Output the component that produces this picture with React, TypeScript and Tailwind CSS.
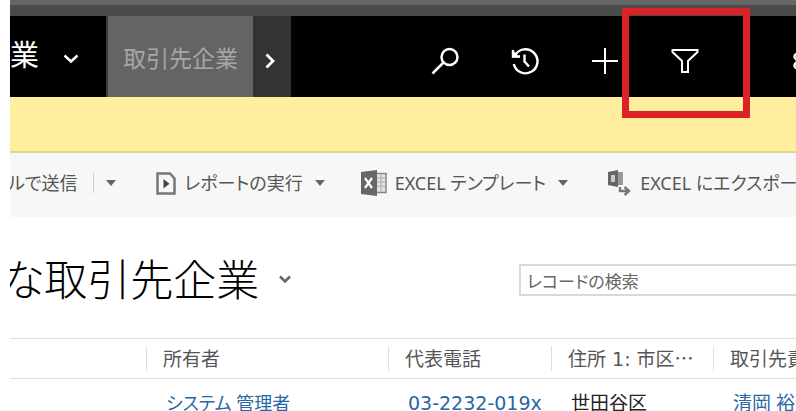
import type { ReactNode } from "react";
import { Settings } from "lucide-react";

function Caret() {
  return (
    <svg width="10" height="6" viewBox="0 0 10 6" aria-hidden="true">
      <path d="M0 0h10L5 6z" fill="#666" />
    </svg>
  );
}

function IconButton({ label, className = "", children }: { label: string; className?: string; children: ReactNode }) {
  return (
    <button type="button" aria-label={label} className={`flex h-full w-20 shrink-0 items-center justify-center ${className}`}>
      {children}
    </button>
  );
}

function Header() {
  return (
    <header className="flex h-[81px] bg-black text-white">
      <div className="flex w-24 shrink-0 items-center overflow-hidden">
        <button type="button" className="flex shrink-0 items-center gap-6">
          <span className="-mt-1 text-[29px] leading-10">業</span>
          <svg width="16" height="10" viewBox="0 0 16 10" className="mt-1" aria-hidden="true">
            <path d="M1.5 1.5L8 7.5l6.500-6" fill="none" stroke="#fff" strokeWidth="2.400" />
          </svg>
        </button>
      </div>
      <button type="button" className="w-[147px] shrink-0 border-l-2 border-[#3c3c3c] bg-[#646464] pt-1 text-[23px] text-[#a6a6a6]">
        取引先企業
      </button>
      <button type="button" aria-label="次へ" className="flex w-[38px] shrink-0 items-center bg-[#333] pl-3 pt-2">
        <svg width="10" height="16" viewBox="0 0 10 16" aria-hidden="true">
          <path d="M1.500 1.500L8 8l-6.500 6.500" fill="none" stroke="#fff" strokeWidth="2.800" />
        </svg>
      </button>
      <nav className="flex min-w-0 flex-1 overflow-hidden pl-[114px] pt-2" aria-label="ツール">
        <IconButton label="検索">
          <svg width="28" height="28" viewBox="0 0 28 28" fill="none" stroke="#fff" strokeWidth="2.500" aria-hidden="true">
            <circle cx="18.500" cy="10" r="8" />
            <path d="M12.500 15.500L1.500 26.500" />
          </svg>
        </IconButton>
        <IconButton label="履歴">
          <svg width="28" height="28" viewBox="0 0 28 28" fill="none" stroke="#fff" strokeWidth="2.400" aria-hidden="true">
            <path d="M4 8.500A12 12 0 1 1 2.800 17M2 3v6.500h7M13.500 7.500v7l4.500 5" />
            <path d="M1 2.500v8h8z" fill="#fff" stroke="none" />
          </svg>
        </IconButton>
        <IconButton label="新規作成">
          <svg width="26" height="26" viewBox="0 0 26 26" stroke="#fff" strokeWidth="2" aria-hidden="true">
            <path d="M13 0v26M0 13h26" />
          </svg>
        </IconButton>
        <IconButton label="高度な検索">
          <svg width="28" height="26" viewBox="0 0 28 26" fill="none" stroke="#fff" strokeWidth="2" aria-hidden="true">
            <path d="M1.500 2h25v2l-9.500 9v11h-6V13L1.500 4z" />
          </svg>
        </IconButton>
        <IconButton label="設定" className="ml-10">
          <Settings size={28} strokeWidth={2} />
        </IconButton>
      </nav>
    </header>
  );
}

function CommandBar() {
  return (
    <div role="toolbar" className="flex h-16 items-center overflow-hidden whitespace-nowrap bg-[#f7f7f7] pb-1 text-[18px] text-[#555]">
      <button type="button" className="-ml-0.5 shrink-0">ルで送信</button>
      <button type="button" aria-label="送信オプション" className="ml-4 flex h-5 items-center border-l border-[#ccc] pl-3"><Caret /></button>
      <button type="button" className="ml-10 flex shrink-0 items-center gap-2">
        <svg width="20" height="23" viewBox="0 0 20 23" aria-hidden="true">
          <path d="M1.500 1.500H14l4.500 5v15h-17z" fill="none" stroke="#777" strokeWidth="2.500" />
          <path d="M7.500 7v9.500l6-4.800z" fill="#444" />
        </svg>
        レポートの実行
        <span className="ml-1"><Caret /></span>
      </button>
      <button type="button" className="ml-9 flex shrink-0 items-center gap-2">
        <svg width="26" height="26" viewBox="0 0 26 26" aria-hidden="true">
          <path d="M15 3.500h10v19H15" fill="#e4e4e4" stroke="#888" strokeWidth="1.500" />
          <path d="M16 8h8M16 12h8M16 16h8M20 4v18" stroke="#aaa" />
          <path d="M0 2l16-2v26L0 24z" fill="#666" />
          <path d="M4 8l7 10M11 8L4 18" stroke="#fff" strokeWidth="2.200" />
        </svg>
        EXCEL テンプレート
        <span className="ml-1"><Caret /></span>
      </button>
      <button type="button" className="ml-10 flex shrink-0 items-center gap-2">
        <svg width="24" height="26" viewBox="0 0 24 26" aria-hidden="true">
          <path d="M0 2l10-2v17L0 15z" fill="#666" />
          <path d="M3 5h4v7H3z" fill="#ccc" />
          <path d="M10 2h5v13h-5z" fill="#999" />
          <path d="M12 17v4h9M16.500 17l4.500 4-4.500 4" fill="none" stroke="#777" strokeWidth="2.400" />
        </svg>
        EXCEL にエクスポート
      </button>
    </div>
  );
}

const columns = ["所有者", "代表電話", "住所 1: 市区…", "取引先責任者"];

function AccountsGrid() {
  return (
    <table className="w-full min-w-[860px] table-fixed border-collapse text-left text-[19px]">
      <colgroup>
        <col className="w-[136px]" />
        <col className="w-[242px]" />
        <col className="w-[163px]" />
        <col className="w-[162px]" />
        <col />
      </colgroup>
      <thead>
        <tr className="h-10 border-y border-[#ddd] font-['DejaVu_Sans','Noto_Sans_CJK_JP',sans-serif] text-[#555] [font-feature-settings:normal]">
          <th aria-label="名前" />
          {columns.map((column) => (
            <th key={column} scope="col" className="whitespace-nowrap p-0 font-normal">
              <span className="block border-l border-[#ddd] pl-4 leading-6">
                {column.replace("…", "")}
                {column.endsWith("…") && <span className="font-['Noto_Sans_CJK_JP',sans-serif]">…</span>}
              </span>
            </th>
          ))}
        </tr>
      </thead>
      <tbody>
        <tr className="whitespace-nowrap leading-6 text-[#2867a5]">
          <td />
          <td className="pl-5 pt-3 text-[18px]"><a href="#owner">システム 管理者</a></td>
          <td className="pl-5 pt-3 font-['DejaVu_Sans',sans-serif]"><a href="#phone">03-2232-019x</a></td>
          <td className="pl-5 pt-3 text-[#222]">世田谷区</td>
          <td className="pl-5 pt-3"><a href="#contact">清岡 裕一</a></td>
        </tr>
      </tbody>
    </table>
  );
}

export default function App() {
  return (
    <div lang="ja" className="h-screen overflow-hidden bg-white pl-[10px] font-['Noto_Sans','Noto_Sans_CJK_JP',sans-serif] [font-feature-settings:'palt']">
      <div className="relative">
        <div className="h-4 border-t-[5px] border-[#666] bg-[#4a4a4a]" />
        <Header />
        <div className="h-14 border-b-2 border-[#ded78f] bg-[#feee9d]" />
        <div className="absolute left-[612px] top-2 h-[110px] w-[128px] border-[7px] border-[#dc2226]" />
      </div>
      <CommandBar />
      <main className="overflow-hidden">
        <div className="flex h-[121px] items-center pt-1">
          <h1 className="-ml-2 flex w-[517px] shrink-0 items-center gap-5 text-[43px] font-light leading-[56px] text-black">
            な取引先企業
            <svg width="12" height="9" viewBox="0 0 12 9" aria-hidden="true">
              <path d="M1 1.500l5 5 5-5" fill="none" stroke="#666" strokeWidth="2.500" />
            </svg>
          </h1>
          <input
            type="text"
            aria-label="レコードの検索"
            placeholder="レコードの検索"
            className="h-8 min-w-0 flex-1 border-2 border-r-0 border-[#d9d9d9] bg-white px-1.5 pt-1 text-[17px] placeholder:text-[#666]"
          />
        </div>
        <AccountsGrid />
      </main>
    </div>
  );
}
